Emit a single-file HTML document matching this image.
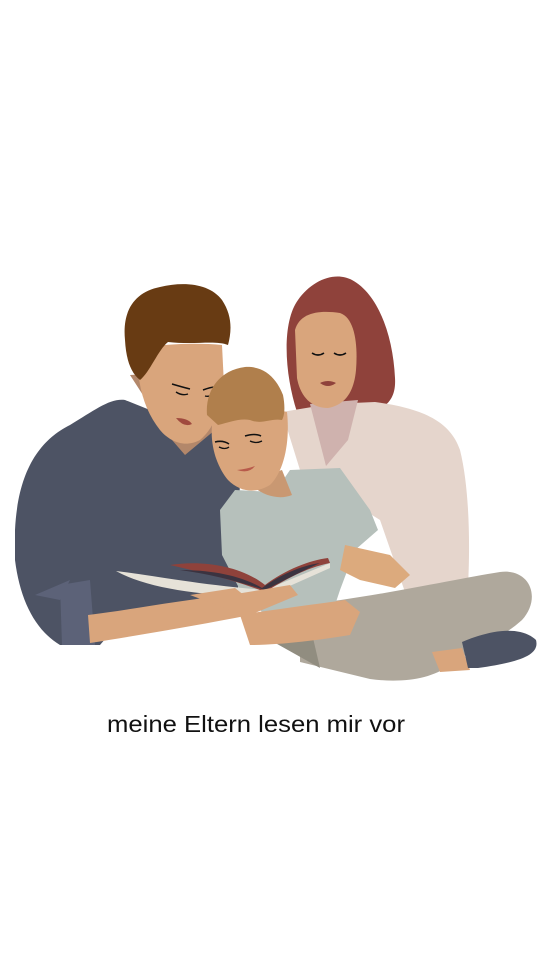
<!DOCTYPE html>
<html><head><meta charset="utf-8"><style>
html,body{margin:0;padding:0;background:#fff;}
svg{display:block}
</style></head><body>
<svg width="541" height="961" viewBox="0 0 541 961" xmlns="http://www.w3.org/2000/svg">
<rect width="541" height="961" fill="#fff"/>
<!-- mom hair -->
<path d="M297,412 C284,372 282,322 298,300 C312,280 335,271 352,280 C378,294 393,335 395,378 C396,395 390,404 378,410 Z" fill="#8f423b"/>
<!-- mom cardigan -->
<path d="M282,412 L330,404 L375,402 C420,408 450,420 460,450 C470,490 470,550 468,586 L405,592 L380,520 L300,470 Z" fill="#e5d5cc"/>
<path d="M310,404 L358,400 L348,440 L326,466 Z" fill="#cfb2ae"/>
<!-- mom face -->
<path d="M295,330 C300,312 320,310 340,313 C355,318 358,345 356,370 C354,392 345,405 328,408 C310,408 300,395 297,378 Z" fill="#d9a57c"/>
<path d="M312,353 q6,4 12,0 M334,353 q6,4 12,0" stroke="#111" stroke-width="1.6" fill="none"/>
<path d="M320,383 q8,-4 16,0 q-8,6 -16,0Z" fill="#8f423b"/>
<!-- mom pants -->
<path d="M300,605 C370,598 450,580 500,572 C530,568 542,598 522,620 C500,640 470,650 450,665 C430,680 400,683 370,679 L300,662 Z" fill="#afa89c"/>
<path d="M270,640 L310,625 L320,668 Z" fill="#918d80"/>
<path d="M432,652 L462,648 L470,670 L440,672 Z" fill="#d9a57c"/>
<path d="M462,642 C490,630 520,625 536,640 C540,655 520,662 478,668 L468,668 Z" fill="#4d5364"/>
<!-- dad sweater -->
<path d="M15,530 C18,470 40,440 70,425 C95,410 110,398 125,400 L150,410 L220,420 L240,470 L238,600 L130,610 L100,645 L60,645 C35,630 20,600 15,560 Z" fill="#4d5364"/>
<path d="M60,585 L90,580 L95,645 L62,645 Z" fill="#5c6278"/>
<path d="M35,595 L70,580 L60,600 Z" fill="#5c6278"/>
<!-- dad neck/face -->
<path d="M130,375 L172,440 L185,455 L215,430 L215,370 Z" fill="#b3876a"/>
<path d="M138,350 C150,345 190,342 222,345 L224,385 C222,410 212,430 200,440 C185,448 170,442 160,430 C148,415 140,395 138,370 Z" fill="#d9a57c"/>
<path d="M172,384 q10,3 18,5 M203,390 q8,-3 12,-3" stroke="#111" stroke-width="1.6" fill="none"/>
<path d="M176,392 q6,4 12,2 M205,396 q4,1 8,-1" stroke="#111" stroke-width="1.4" fill="none"/>
<path d="M176,418 q12,0 16,6 q-8,4 -16,-6Z" fill="#a04a3e"/>
<!-- dad hair -->
<path d="M125,340 C122,310 135,292 160,287 C185,281 210,284 222,300 C232,315 232,330 228,345 C215,340 195,345 168,342 C158,350 150,372 140,380 C130,372 126,358 125,340 Z" fill="#683b13"/>
<!-- boy shirt -->
<path d="M235,490 L275,492 L290,470 L340,468 L370,510 L378,530 L355,550 L340,590 L330,620 L270,620 L240,590 L222,555 L220,510 Z" fill="#b6c0bb"/>
<path d="M255,478 L282,470 L292,495 C280,500 265,496 255,488 Z" fill="#c99872"/>
<!-- boy face -->
<path d="M212,425 C215,410 240,405 270,408 L287,412 C290,440 285,470 270,485 C255,494 240,492 228,480 C218,468 210,448 212,425 Z" fill="#d9a57c"/>
<path d="M215,442 q8,-2 14,2 M245,436 q10,-3 16,0" stroke="#111" stroke-width="1.6" fill="none"/>
<path d="M219,447 q6,3 10,0 M250,441 q6,3 12,0" stroke="#111" stroke-width="1.3" fill="none"/>
<path d="M237,470 q10,-1 18,-4 q-6,8 -18,4Z" fill="#b85a4a"/>
<!-- boy hair -->
<path d="M207,415 C205,390 220,370 245,367 C262,366 275,375 283,395 C285,405 285,415 282,420 C270,418 262,425 250,420 C240,418 230,422 218,425 Z" fill="#b07f4c"/>
<!-- boy hands/arms -->
<path d="M345,545 L390,555 L410,575 L395,588 L360,580 L340,570 Z" fill="#dcaa7d"/>
<path d="M240,615 C270,610 310,605 345,600 L360,612 L350,635 C320,640 280,645 250,645 Z" fill="#d9a57c"/>
<!-- book -->
<path d="M116,571 C150,575 200,585 265,590 L330,563 L330,568 L265,597 C210,596 150,590 116,571 Z" fill="#e6e2d8"/>
<path d="M170,565 C200,560 240,565 265,585 C285,570 310,560 328,558 L330,563 C305,568 285,580 265,592 C235,580 200,572 170,565 Z" fill="#8f423b"/>
<path d="M180,570 C210,570 240,575 262,588 C280,575 300,566 320,563 C300,572 285,580 265,590 C240,582 210,574 180,570 Z" fill="#3b3340"/>
<!-- dad arm + hands -->
<path d="M88,615 C130,610 180,600 230,595 L290,585 L298,595 L250,615 C200,625 140,635 90,643 Z" fill="#d9a57c"/>
<path d="M190,595 L235,588 L250,600 L230,610 Z" fill="#d9a57c"/>
</svg>
<div style="position:absolute;left:0;top:0;width:541px;height:961px;">
<svg width="541" height="961" style="position:absolute;left:0;top:0"><text x="107" y="732" font-family="Liberation Sans, sans-serif" font-size="23" fill="#111" textLength="298" lengthAdjust="spacingAndGlyphs">meine Eltern lesen mir vor</text></svg>
</div>
</body></html>
